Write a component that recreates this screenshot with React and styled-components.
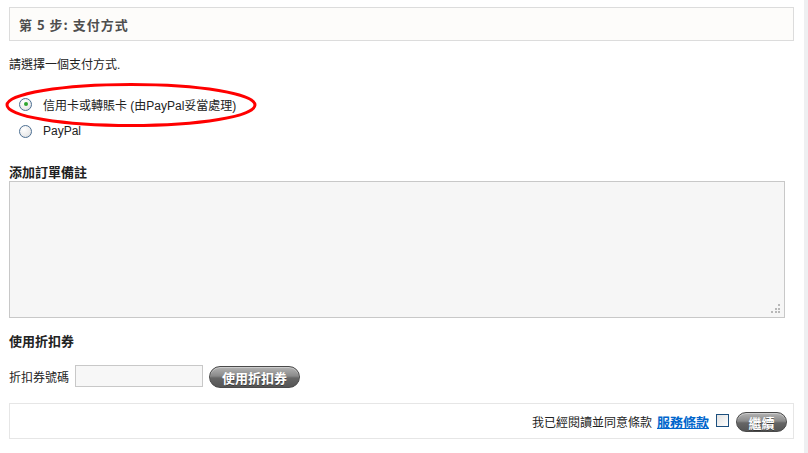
import React from "react";
import styled, { createGlobalStyle } from "styled-components";

const GlobalStyle = createGlobalStyle`
  html, body {
    margin: 0;
    padding: 0;
    background: #fff;
  }
  body {
    font-family: "Liberation Sans", "Noto Sans CJK TC", sans-serif;
    font-size: 12px;
    color: #222;
  }
`;

const App = () => {
  return (
    <Page>
      <GlobalStyle />
      <Main>
        <StepHeader>
          <h3>第 5 步: 支付方式</h3>
        </StepHeader>
        <Prompt>請選擇一個支付方式.</Prompt>
        <Methods>
          <Highlight viewBox="0 0 252 46">
            <ellipse cx="126" cy="23" rx="124" ry="20.5" fill="none" stroke="#f00" strokeWidth="3" />
          </Highlight>
          <Method>
            <Radio $checked />
            <MethodLabel>信用卡或轉賬卡 (由PayPal妥當處理)</MethodLabel>
          </Method>
          <Method>
            <Radio />
            <MethodLabel>PayPal</MethodLabel>
          </Method>
        </Methods>
        <SectionTitle $gap="26px">添加訂單備註</SectionTitle>
        <NoteBox>
          <textarea />
          <Grip>
            <i /><i /><i /><i /><i /><i />
          </Grip>
        </NoteBox>
        <SectionTitle $gap="15px">使用折扣券</SectionTitle>
        <CouponRow>
          <label>折扣券號碼</label>
          <CouponInput />
          <PillButton $width="91px">使用折扣券</PillButton>
        </CouponRow>
        <ConfirmBar>
          <span>我已經閱讀並同意條款</span>
          <TermsLink>服務條款</TermsLink>
          <CheckBox />
          <PillButton $width="51px" $height="20px">繼續</PillButton>
        </ConfirmBar>
      </Main>
      <Strip />
    </Page>
  );
};

const Page = styled.div`
  display: flex;
  min-height: 453px;
`;

const Main = styled.div`
  width: 785px;
  margin-left: 9px;
  padding-top: 7px;
`;

const Strip = styled.div`
  width: 4px;
  margin-left: auto;
  background: #eeeff1;
`;

const StepHeader = styled.div`
  height: 34px;
  box-sizing: border-box;
  border: 1px solid #dcdcdc;
  background: #fdfcfa;
  display: flex;
  align-items: center;
  padding-left: 9px;
  h3 {
    margin: 0;
    font-family: "Noto Sans CJK TC", sans-serif;
    font-size: 13px;
    font-weight: bold;
    letter-spacing: 1px;
    color: #4e4e4e;
  }
`;

const Prompt = styled.div`
  margin-top: 17px;
  line-height: 14px;
`;

const Methods = styled.div`
  position: relative;
  margin-top: 25px;
  padding-left: 10px;
  display: flex;
  flex-direction: column;
  gap: 13px;
`;

const Highlight = styled.svg`
  position: absolute;
  left: -4px;
  top: -15px;
  width: 252px;
  height: 46px;
  pointer-events: none;
`;

const Method = styled.div`
  display: flex;
  align-items: center;
  height: 14px;
`;

const MethodLabel = styled.span`
  margin-left: 11px;
`;

const Radio = styled.div`
  width: 11px;
  height: 11px;
  border-radius: 50%;
  border: 1px solid #4d6f92;
  background: radial-gradient(circle at 35% 30%, #fff 0%, #ececec 60%, #cfd3d8 100%);
  position: relative;
  flex: none;
  &::after {
    content: "";
    display: ${(p) => (p.$checked ? "block" : "none")};
    position: absolute;
    left: 3.5px;
    top: 3.5px;
    width: 4px;
    height: 4px;
    border-radius: 50%;
    background: #2fa52f;
  }
`;

const SectionTitle = styled.div`
  margin-top: ${(p) => p.$gap || "28px"};
  font-family: "Noto Sans CJK TC", sans-serif;
  font-size: 13px;
  font-weight: bold;
  line-height: 16px;
  color: #222;
`;

const NoteBox = styled.div`
  position: relative;
  margin-top: 1px;
  width: 776px;
  height: 137px;
  textarea {
    display: block;
    width: 100%;
    height: 100%;
    box-sizing: border-box;
    margin: 0;
    border: 1px solid #c8c8c8;
    background: #f6f6f6;
    resize: none;
    outline: none;
  }
`;

const Grip = styled.div`
  position: absolute;
  right: 5px;
  bottom: 5px;
  width: 9px;
  height: 9px;
  display: grid;
  grid-template-columns: repeat(3, 2px);
  grid-template-rows: repeat(3, 2px);
  gap: 1.5px;
  i {
    background: #b8b8b8;
  }
  i:nth-child(1) { grid-area: 1 / 3; }
  i:nth-child(2) { grid-area: 2 / 2; }
  i:nth-child(3) { grid-area: 2 / 3; }
  i:nth-child(4) { grid-area: 3 / 1; }
  i:nth-child(5) { grid-area: 3 / 2; }
  i:nth-child(6) { grid-area: 3 / 3; }
`;

const CouponRow = styled.div`
  margin-top: 15px;
  display: flex;
  align-items: center;
  label {
    margin-right: 6px;
  }
`;

const CouponInput = styled.input`
  width: 128px;
  height: 22px;
  box-sizing: border-box;
  border: 1px solid #c8c8c8;
  background: #f7f7f7;
  margin: 0 6px 0 0;
`;

const PillButton = styled.button`
  width: ${(p) => p.$width};
  height: ${(p) => p.$height || "22px"};
  margin-top: 2px;
  box-sizing: border-box;
  border: 1px solid #4a4a4a;
  border-radius: 11px;
  background: linear-gradient(#b4b4b4 0%, #8a8a8a 45%, #666 55%, #555 100%);
  color: #fff;
  font-family: "Noto Sans CJK TC", sans-serif;
  font-size: 13px;
  font-weight: bold;
  line-height: 1;
  padding: 0;
  box-shadow: inset 0 1px 0 rgba(255, 255, 255, 0.35);
  text-shadow: 0 1px 0 rgba(0, 0, 0, 0.4);
`;

const ConfirmBar = styled.div`
  margin-top: 15px;
  height: 36px;
  box-sizing: border-box;
  border: 1px solid #e6e6e6;
  display: flex;
  align-items: center;
  justify-content: flex-end;
  padding-right: 6px;
  span {
    margin-right: 5px;
  }
`;

const TermsLink = styled.a`
  color: #0066cc;
  font-family: "Noto Sans CJK TC", sans-serif;
  font-weight: bold;
  font-size: 13px;
  text-decoration: underline;
  margin-right: 7px;
`;

const CheckBox = styled.div`
  width: 11px;
  height: 11px;
  border: 1px solid #1c4f7e;
  background: linear-gradient(135deg, #e2e2e2, #fff);
  margin-right: 7px;
  margin-top: -2px;
`;

export default App;
